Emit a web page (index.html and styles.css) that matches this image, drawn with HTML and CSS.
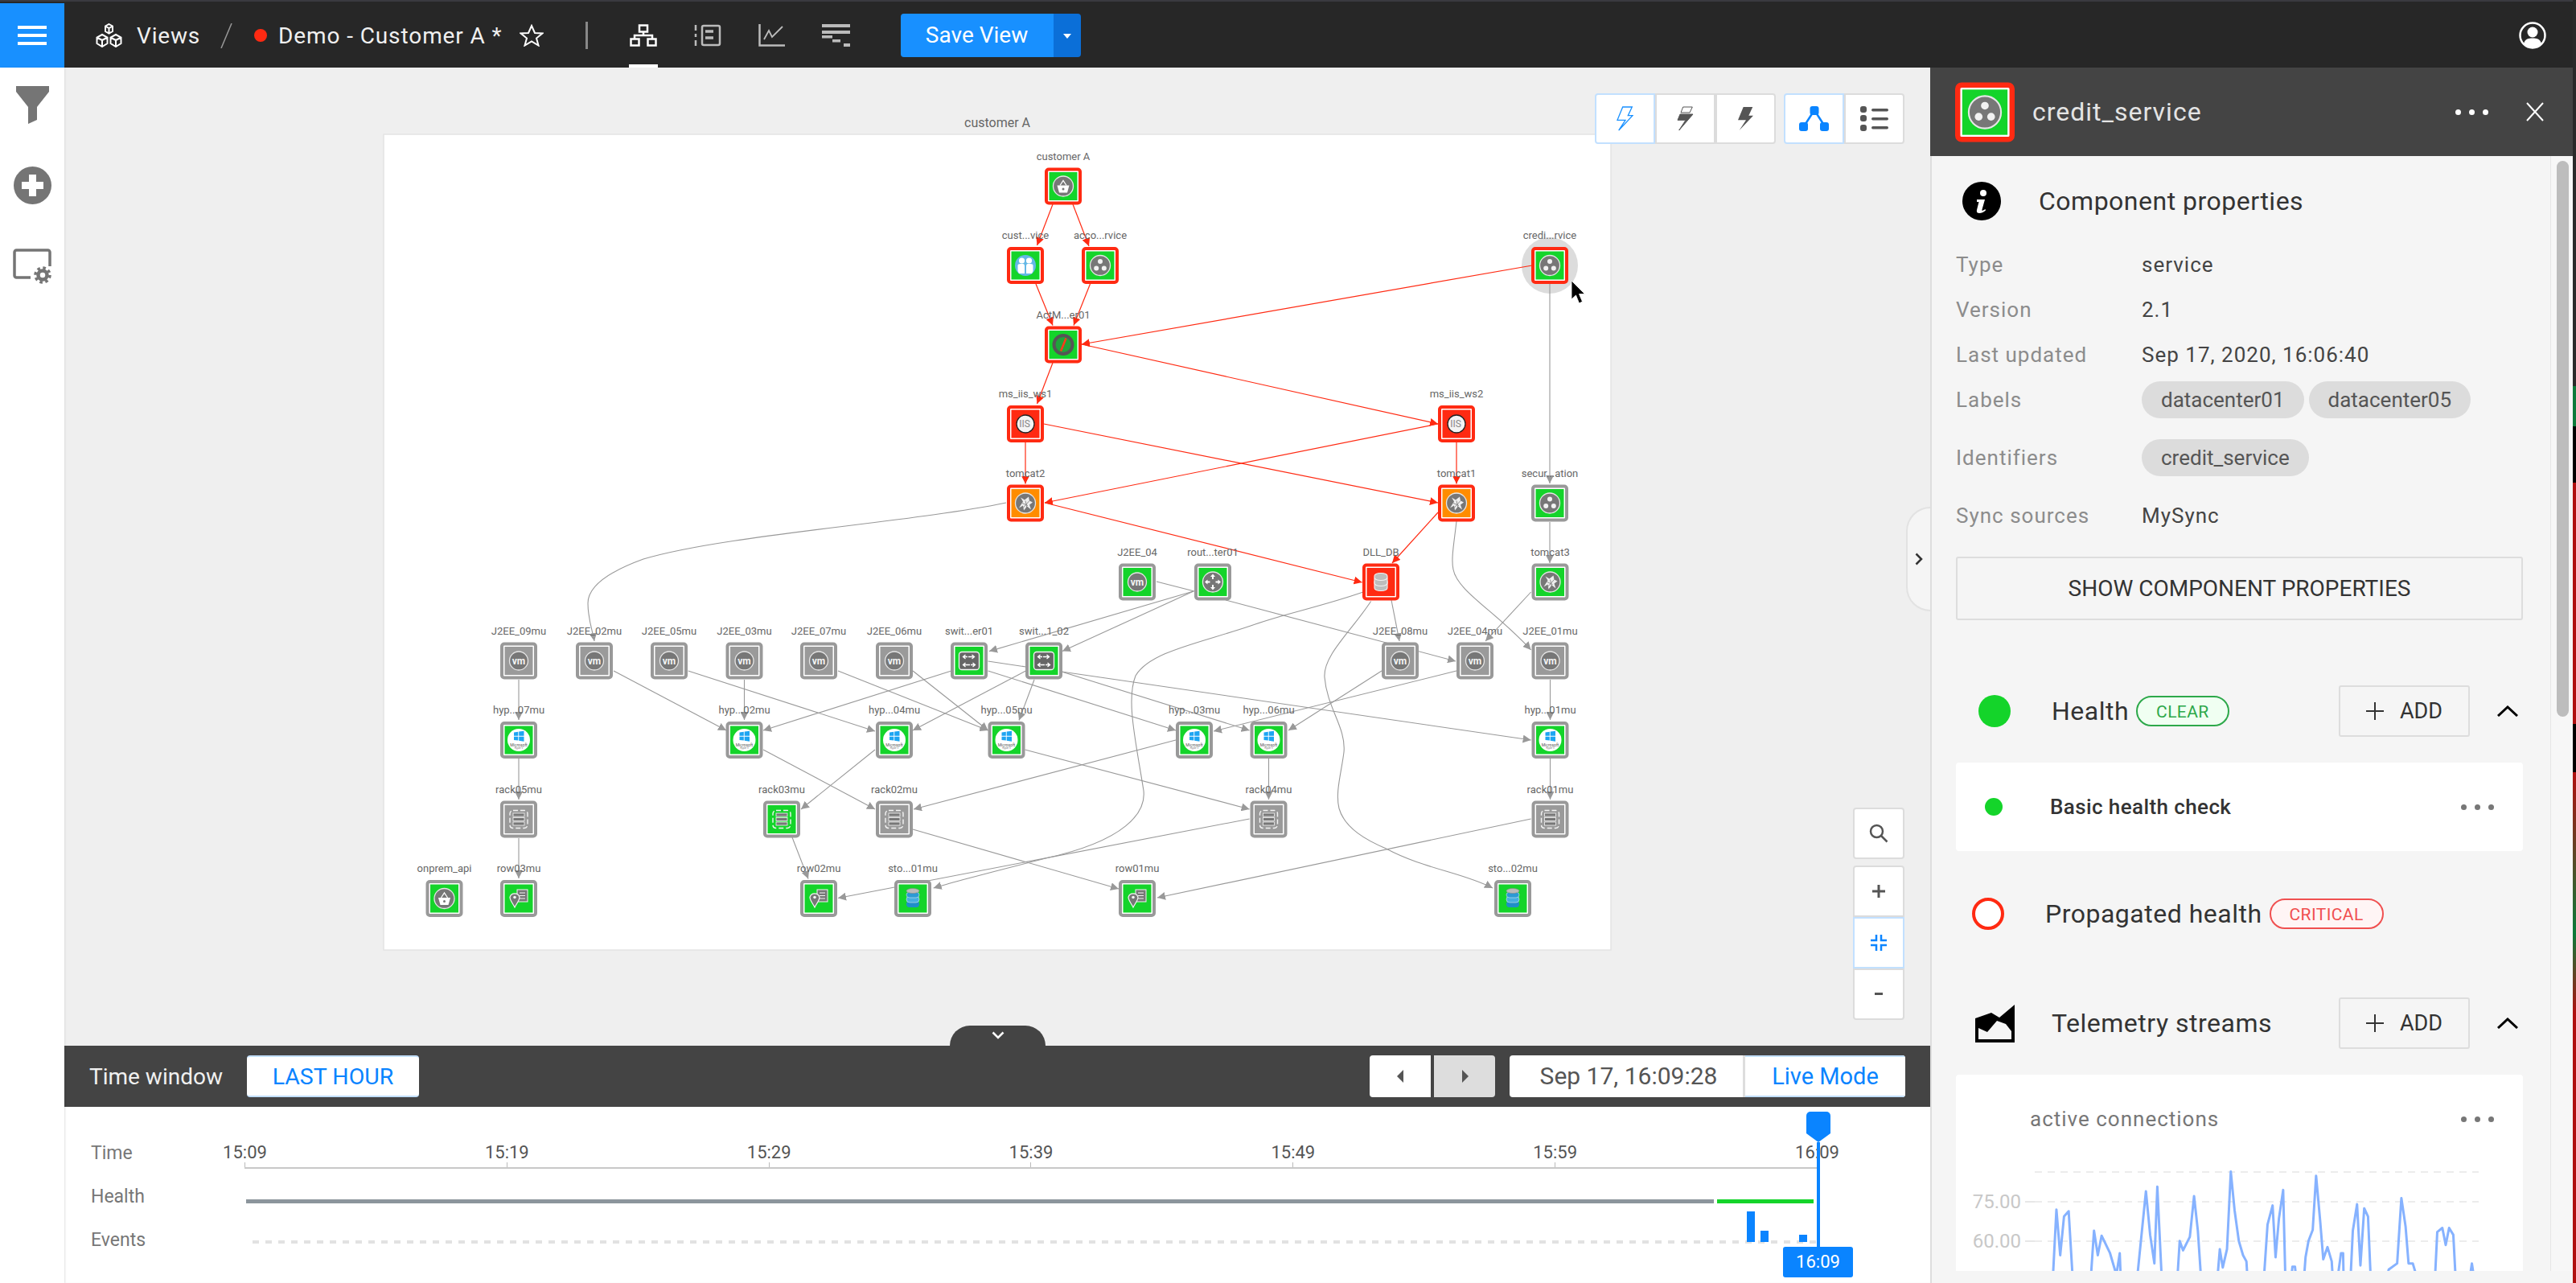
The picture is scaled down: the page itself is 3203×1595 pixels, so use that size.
FILE: index.html
```html
<!DOCTYPE html>
<html lang="en">
<head>
  <meta charset="UTF-8">
  <title>Views - Demo - Customer A</title>
  <link rel="stylesheet" href="styles.css">
</head>
<body>
<div class="app">
  <header class="topbar">
    <button class="menu-btn"><span></span><span></span><span></span></button>
    <svg class="views-icon" width="33" height="30" viewBox="0 0 33 30" fill="none" stroke="#fff" stroke-width="2">
      <path d="M16.5 1 21 3.5V10L16.5 12.5 12 10V3.5ZM12 3.5 16.5 6 21 3.5M16.5 6V12.5"/>
      <path d="M8 14 14.5 17.5V25L8 29 1.5 25V17.5ZM1.5 17.5 8 21 14.5 17.5M8 21V29"/>
      <path d="M25 14 31.5 17.5V25L25 29 18.5 25V17.5ZM18.5 17.5 25 21 31.5 17.5M25 21V29"/>
    </svg>
    <span class="crumb">Views</span>
    <svg class="crumb-slash" width="15" height="31" viewBox="0 0 15 31"><path d="M14 0 1 31" stroke="#999" stroke-width="1.5"/></svg>
    <span class="state-dot"></span>
    <span class="crumb crumb-view">Demo - Customer A *</span>
    <svg class="star-icon" width="30" height="28" viewBox="0 0 30 28" fill="none" stroke="#fff" stroke-width="2"><path d="M15 2 19 11 28.500 11.500 21 17.500 23.500 26.500 15 21.500 6.500 26.500 9 17.500 1.500 11.500 11 11Z"/></svg>
    <span class="bar-divider"></span>
    <nav class="view-tabs">
      <a class="view-tab active">
        <svg width="34" height="28" viewBox="0 0 34 28" fill="none" stroke="#fff" stroke-width="2.500"><rect x="12" y="1.500" width="10" height="8"/><path d="M17 9.500V14M6 18V14H28V18"/><rect x="1.500" y="18.500" width="10" height="8"/><rect x="22.500" y="18.500" width="10" height="8"/></svg>
      </a>
      <a class="view-tab">
        <svg width="34" height="28" viewBox="0 0 34 28" fill="none" stroke="#bbb" stroke-width="2.500"><path d="M2 1V8M2 12V16M2 20V27"/><rect x="10" y="2" width="22" height="24" rx="2"/><path d="M14 9H24M14 17H24" stroke-width="3.500"/></svg>
      </a>
      <a class="view-tab">
        <svg width="34" height="28" viewBox="0 0 34 28" fill="none" stroke="#bbb" stroke-width="2.500"><path d="M1.500 0V26.500H33"/><path d="M7 19 13 8 17 16 30 3" stroke-width="1.800"/></svg>
      </a>
      <a class="view-tab">
        <svg width="36" height="28" viewBox="0 0 36 28" fill="#bbb"><rect width="35" height="4"/><rect y="8" width="35" height="4"/><rect y="14" width="13" height="3.500"/><rect x="13" y="19" width="10" height="3.500"/><rect x="27" y="24" width="8" height="4"/></svg>
      </a>
    </nav>
    <div class="save-btn">
      <span class="save-main">Save View</span>
      <span class="save-caret"></span>
    </div>
    <svg class="user-icon" width="34" height="34" viewBox="0 0 34 34"><circle cx="17" cy="17" r="15.500" fill="none" stroke="#fff" stroke-width="2.500"/><circle cx="17" cy="13" r="6.500" fill="#fff"/><path d="M6 27C8 21 12 20.500 17 20.500S26 21 28 27C25 30.500 21 32 17 32S9 30.500 6 27Z" fill="#fff"/></svg>
  </header>

  <div class="main">
    <aside class="rail">
      <svg width="41" height="47" viewBox="0 0 41 47" fill="#757575"><path d="M0 0H41V7L26 26V42L15 47V26L0 7Z"/></svg>
      <svg width="47" height="47" viewBox="0 0 47 47"><circle cx="23.500" cy="23.500" r="23.500" fill="#757575"/><path d="M19 10H28V19H37V28H28V37H19V28H10V19H19Z" fill="#fff"/></svg>
      <svg width="48" height="44" viewBox="0 0 48 44" fill="none" stroke="#757575"><path d="M22 36H4.500A2.500 2.500 0 0 1 2 33.500V4.500A2.500 2.500 0 0 1 4.500 2H43.500A2.500 2.500 0 0 1 46 4.500V22" stroke-width="3.500"/><circle cx="37" cy="33" r="5.500" stroke-width="4.500"/><circle cx="37" cy="33" r="9" stroke-width="3.500" stroke-dasharray="3.600 3.470"/></svg>
    </aside>

    <div class="workspace">
      <section class="canvas">
        <svg class="graph" width="2320" height="1216" viewBox="80 84 2320 1216">
          <defs>
            <marker id="arrow-gray" viewBox="0 0 10 10" refX="10" refY="5" markerWidth="10" markerHeight="10" markerUnits="userSpaceOnUse" orient="auto"><path d="M0 0 10 5 0 10Z" fill="#999"/></marker>
            <marker id="arrow-red" viewBox="0 0 10 10" refX="10" refY="5" markerWidth="10" markerHeight="10" markerUnits="userSpaceOnUse" orient="auto"><path d="M0 0 10 5 0 10Z" fill="#ff2a12"/></marker>

            <!-- frames: border colour + fill colour -->
            <g id="f-gg"><rect class="fr-gray" x="-21" y="-21" width="42" height="42" rx="3"/><rect class="in-green" x="-17.500" y="-17.500" width="35" height="35"/></g>
            <g id="f-gy"><rect class="fr-gray" x="-21" y="-21" width="42" height="42" rx="3"/><rect class="in-gray" x="-17.500" y="-17.500" width="35" height="35"/></g>
            <g id="f-rg"><rect class="fr-red" x="-21" y="-21" width="42" height="42" rx="3"/><rect class="in-green" x="-17.500" y="-17.500" width="35" height="35"/></g>
            <g id="f-rr"><rect class="fr-red" x="-21" y="-21" width="42" height="42" rx="3"/><rect class="in-red" x="-17.500" y="-17.500" width="35" height="35"/></g>
            <g id="f-ro"><rect class="fr-red" x="-21" y="-21" width="42" height="42" rx="3"/><rect class="in-orange" x="-17.500" y="-17.500" width="35" height="35"/></g>

            <!-- node icons -->
            <g id="i-vm"><circle r="11.500" fill="#777" stroke="#e6e6e6" stroke-width="1.300"/><text class="ic-vm" y="4">vm</text></g>
            <g id="i-service"><circle r="12.500" fill="#777" stroke="#e6e6e6" stroke-width="1.300"/><circle cy="-5" r="3" fill="#f2f2f2"/><circle cx="-4.800" cy="3.500" r="3" fill="#f2f2f2"/><circle cx="4.800" cy="3.500" r="3" fill="#f2f2f2"/></g>
            <g id="i-basket"><circle r="12.500" fill="#777" stroke="#e6e6e6" stroke-width="1.300"/><path d="M-7.500 -1H7.500L5 8H-5Z" fill="#fff"/><path d="M-4 -1 0 -7 4 -1" fill="none" stroke="#fff" stroke-width="1.300"/><circle cy="3.500" r="1.500" fill="#777"/></g>
            <g id="i-customers"><circle r="13" fill="#63b7e6"/><circle cx="-4.500" cy="-6" r="3.600" fill="#fff"/><circle cx="4.500" cy="-6" r="3.600" fill="#fff"/><path d="M-9.500 7V0Q-9.500 -2 -6 -2H-3Q-1 -2 -1 1V10H-8ZM1 10V1Q1 -2 3 -2H6Q9.500 -2 9.500 0V7L8 10Z" fill="#fff"/></g>
            <g id="i-compass"><circle r="11.500" fill="#1fa33a" stroke="#555" stroke-width="4"/><path d="M-3 8 3.500 -8" stroke="#ff3a1a" stroke-width="2.500"/></g>
            <g id="i-iis"><circle r="11" fill="#f4f4f4" stroke="#222" stroke-width="1.300"/><text class="ic-iis" x="-1" y="4">IIS</text></g>
            <g id="i-tomcat"><circle r="12.500" fill="#777" stroke="#e6e6e6" stroke-width="1.300"/><path d="M-8 6-3-2-6-7-1-4 4-8 5-3 9-1 5 2 7 8 2 4-2 9-3 3Z" fill="#eee"/><path d="M-4 0 3 3M0-3 2 6M-3 6 5-3" stroke="#777" stroke-width=".8"/></g>
            <g id="i-db" fill="#bdbdbd" stroke="#f2f2f2" stroke-width="1.100"><rect x="-8" y="-4" width="16" height="15" rx="7.500" ry="3.500"/><rect x="-8" y="-8" width="16" height="13" rx="7.500" ry="3.500"/><rect x="-8" y="-11" width="16" height="9" rx="7.500" ry="3.500"/></g>
            <g id="i-router"><circle r="12.500" fill="#777" stroke="#e6e6e6" stroke-width="1.300"/><path d="M0-10 3-6.500H1V-3.500H-1V-6.500H-3ZM0 10 3 6.500H1V3.500H-1V6.500H-3ZM-10 0-6.500-3V-1H-3.500V1H-6.500V3ZM10 0 6.500-3V-1H3.500V1H6.500V3Z" fill="#fff"/></g>
            <g id="i-switch"><rect x="-12.500" y="-11" width="25" height="22" rx="3.500" fill="#666" stroke="#f4f4f4" stroke-width="1.300"/><path d="M-1-5H6M3.500-7.500 6.500-5 3.500-2.500M1 5H-7M-4.500 2.500-7.500 5-4.500 7.500M-7-5H-2M-4.500-7.500-7.500-5-4.500-2.500M2 5H7M4.500 2.500 7.500 5 4.500 7.500" fill="none" stroke="#fff" stroke-width="1.300"/></g>
            <g id="i-hyperv"><circle r="14" fill="#fff"/><path d="M-6-4.500-.7-5.200V-.2H-6ZM.2-5.400 6.500-6.300V-.2H.2ZM-6 .7H-.7V5.600L-6 4.900ZM.2 .7H6.500V6.800L.2 5.800Z" fill="#1da5f2" transform="translate(0 -5)"/><text class="ic-ms" y="7.500">Microsoft</text><text class="ic-hv" y="11">Hyper-V</text></g>
            <g id="i-rack"><rect x="-11" y="-11" width="22" height="22" rx="4" fill="none" stroke="#f4f4f4" stroke-width="1.400" stroke-dasharray="6 3"/><rect x="-7" y="-7.500" width="14" height="4" fill="#777" stroke="#f4f4f4" stroke-width=".8"/><rect x="-7" y="-2" width="14" height="4" fill="#777" stroke="#f4f4f4" stroke-width=".8"/><rect x="-7" y="3.500" width="14" height="4" fill="#777" stroke="#f4f4f4" stroke-width=".8"/></g>
            <g id="i-row"><rect x="-2" y="-11" width="13" height="15" fill="#777" stroke="#f4f4f4"/><path d="M1-7H8M1-3.500H8M1 0H8" stroke="#f4f4f4"/><path d="M-11-1.500A6.200 6.200 0 0 1 1-1.500C1 2-3 7-5 11-7 7-11 2-11-1.500Z" fill="#777" stroke="#f4f4f4" stroke-width="1.200"/><circle cx="-5" cy="-1.500" r="1.800" fill="#f4f4f4"/></g>
            <g id="i-storage"><rect x="-8" y="3" width="16" height="8" rx="4" fill="#1f8fc8"/><rect x="-8" y="-3" width="16" height="8" rx="4" fill="#45aee0" stroke="#d8e8f0" stroke-width=".6"/><rect x="-8" y="-8" width="16" height="7" rx="4" fill="#2c9ad4" stroke="#d8e8f0" stroke-width=".6"/><ellipse cy="-9.500" rx="8" ry="3" fill="#bbb" stroke="#888" stroke-width=".6"/></g>
          </defs>

          <text class="graph-title" x="1240" y="158">customer A</text>
          <rect class="graph-sheet" x="477" y="167" width="1526" height="1014"/>
          <circle cx="1927" cy="330" r="35" fill="#dcdcdc"/>

          <!-- edges, healthy -->
          <g class="edges-gray" marker-end="url(#arrow-gray)">
            <path d="M1927 353V601"/>
            <path d="M1927 649V700"/>
            <path d="M1251 625C1130 650 900 665 800 695 745 715 731 735 731 750 731 770 737 785 739 797"/>
            <path d="M645 845V895"/>
            <path d="M645 943V994"/>
            <path d="M645 1042V1092"/>
            <path d="M763 834 903 908"/>
            <path d="M855.600 834 1088 909"/>
            <path d="M925.500 845V895"/>
            <path d="M1042 834 1228.500 908"/>
            <path d="M1135 834 1228.500 908"/>
            <path d="M1183 834 949 908"/>
            <path d="M1275.500 834 1135 908"/>
            <path d="M1286 845 1267 895.500"/>
            <path d="M1228.500 834 1462 908"/>
            <path d="M1320 835 1553.600 908"/>
            <path d="M1320 835 1903.600 920"/>
            <path d="M1484 735 1230 809.600"/>
            <path d="M1484 735 1321 809.600"/>
            <path d="M1524 746 1810 822"/>
            <path d="M1730 746 1740 797"/>
            <path d="M1695 736C1640 755 1600 762 1555 778 1490 800 1430 810 1412 840 1400 870 1412 920 1422 983 1425 1010 1400 1045 1300 1067 1250 1080 1190 1095 1160.700 1104"/>
            <path d="M1704.600 747.500C1680 785 1645 815 1647 842 1650 880 1674 905 1671 935 1668 960 1660 985 1665 1005 1672 1030 1700 1045 1723.500 1055 1770 1080 1820 1085 1856 1104"/>
            <path d="M1811 648C1808 675 1804 695 1807 708 1812 735 1860 760 1903.600 808"/>
            <path d="M1903.600 736 1847 797"/>
            <path d="M1718 834 1602 908"/>
            <path d="M1811 834 1509 909"/>
            <path d="M1927.500 845V895"/>
            <path d="M1927.500 943V994"/>
            <path d="M1577.500 943V994"/>
            <path d="M1274.500 932 1553.600 1006"/>
            <path d="M949 932 1088 1006"/>
            <path d="M1088 932 996 1006"/>
            <path d="M1462 920 1136 1006"/>
            <path d="M985 1041 1005 1092.600"/>
            <path d="M1135 1031 1391 1105"/>
            <path d="M1553.600 1018 1042 1116.500"/>
            <path d="M1903.600 1018 1439 1116"/>
          </g>
          <g class="edges-gray">
            <path d="M1228.500 822 1275.500 829"/>
            <path d="M1438 723 1485 735"/>
          </g>

          <!-- edges, propagating -->
          <g class="edges-red" marker-end="url(#arrow-red)">
            <path d="M1309 254 1289.500 305"/>
            <path d="M1334 254 1354 306"/>
            <path d="M1288 353 1309 404.500"/>
            <path d="M1355.500 353 1335 404.500"/>
            <path d="M1905 330 1345 428"/>
            <path d="M1345 428 1788 527"/>
            <path d="M1309 451 1289.500 502"/>
            <path d="M1275 550V601.600"/>
            <path d="M1788 527 1299 625"/>
            <path d="M1298 527 1788 625"/>
            <path d="M1811 550V601.600"/>
            <path d="M1299 625 1693.600 724"/>
            <path d="M1788 637 1731 700"/>
          </g>

          <!-- nodes -->
          <g class="nodes">
            <g transform="translate(1322 231.500)"><use href="#f-rg"/><use href="#i-basket"/><text y="-33">customer A</text></g>
            <g transform="translate(1275 330)"><use href="#f-rg"/><use href="#i-customers"/><text y="-33">cust...vice</text></g>
            <g transform="translate(1368 330)"><use href="#f-rg"/><use href="#i-service"/><text y="-33">acco...rvice</text></g>
            <g transform="translate(1927 330)"><use href="#f-rg"/><use href="#i-service"/><text y="-33">credi...rvice</text></g>
            <g transform="translate(1322 428.500)"><use href="#f-rg"/><use href="#i-compass"/><text y="-33">ActM...er01</text></g>
            <g transform="translate(1275 527)"><use href="#f-rr"/><use href="#i-iis"/><text y="-33">ms_iis_ws1</text></g>
            <g transform="translate(1811 527)"><use href="#f-rr"/><use href="#i-iis"/><text y="-33">ms_iis_ws2</text></g>
            <g transform="translate(1275 625.500)"><use href="#f-ro"/><use href="#i-tomcat"/><text y="-33">tomcat2</text></g>
            <g transform="translate(1811 625.500)"><use href="#f-ro"/><use href="#i-tomcat"/><text y="-33">tomcat1</text></g>
            <g transform="translate(1927 625.500)"><use href="#f-gg"/><use href="#i-service"/><text y="-33">secur...ation</text></g>
            <g transform="translate(1414 723.500)"><use href="#f-gg"/><use href="#i-vm"/><text y="-33">J2EE_04</text></g>
            <g transform="translate(1508 723.500)"><use href="#f-gg"/><use href="#i-router"/><text y="-33">rout...ter01</text></g>
            <g transform="translate(1717 723.500)"><use href="#f-rr"/><use href="#i-db"/><text y="-33">DLL_DB</text></g>
            <g transform="translate(1927.500 723.500)"><use href="#f-gg"/><use href="#i-tomcat"/><text y="-33">tomcat3</text></g>

            <g transform="translate(645 821.500)"><use href="#f-gy"/><use href="#i-vm"/><text y="-33">J2EE_09mu</text></g>
            <g transform="translate(739 821.500)"><use href="#f-gy"/><use href="#i-vm"/><text y="-33">J2EE_02mu</text></g>
            <g transform="translate(832 821.500)"><use href="#f-gy"/><use href="#i-vm"/><text y="-33">J2EE_05mu</text></g>
            <g transform="translate(925.500 821.500)"><use href="#f-gy"/><use href="#i-vm"/><text y="-33">J2EE_03mu</text></g>
            <g transform="translate(1018 821.500)"><use href="#f-gy"/><use href="#i-vm"/><text y="-33">J2EE_07mu</text></g>
            <g transform="translate(1112 821.500)"><use href="#f-gy"/><use href="#i-vm"/><text y="-33">J2EE_06mu</text></g>
            <g transform="translate(1205 821.500)"><use href="#f-gg"/><use href="#i-switch"/><text y="-33">swit...er01</text></g>
            <g transform="translate(1298 821.500)"><use href="#f-gg"/><use href="#i-switch"/><text y="-33">swit...1_02</text></g>
            <g transform="translate(1741 821.500)"><use href="#f-gy"/><use href="#i-vm"/><text y="-33">J2EE_08mu</text></g>
            <g transform="translate(1834 821.500)"><use href="#f-gy"/><use href="#i-vm"/><text y="-33">J2EE_04mu</text></g>
            <g transform="translate(1927.500 821.500)"><use href="#f-gy"/><use href="#i-vm"/><text y="-33">J2EE_01mu</text></g>

            <g transform="translate(645 920)"><use href="#f-gg"/><use href="#i-hyperv"/><text y="-33">hyp...07mu</text></g>
            <g transform="translate(925.500 920)"><use href="#f-gg"/><use href="#i-hyperv"/><text y="-33">hyp...02mu</text></g>
            <g transform="translate(1112 920)"><use href="#f-gg"/><use href="#i-hyperv"/><text y="-33">hyp...04mu</text></g>
            <g transform="translate(1251.500 920)"><use href="#f-gg"/><use href="#i-hyperv"/><text y="-33">hyp...05mu</text></g>
            <g transform="translate(1485 920)"><use href="#f-gg"/><use href="#i-hyperv"/><text y="-33">hyp...03mu</text></g>
            <g transform="translate(1577.500 920)"><use href="#f-gg"/><use href="#i-hyperv"/><text y="-33">hyp...06mu</text></g>
            <g transform="translate(1927.500 920)"><use href="#f-gg"/><use href="#i-hyperv"/><text y="-33">hyp...01mu</text></g>

            <g transform="translate(645 1018.500)"><use href="#f-gy"/><use href="#i-rack"/><text y="-33">rack05mu</text></g>
            <g transform="translate(972 1018.500)"><use href="#f-gg"/><use href="#i-rack"/><text y="-33">rack03mu</text></g>
            <g transform="translate(1112 1018.500)"><use href="#f-gy"/><use href="#i-rack"/><text y="-33">rack02mu</text></g>
            <g transform="translate(1577.500 1018.500)"><use href="#f-gy"/><use href="#i-rack"/><text y="-33">rack04mu</text></g>
            <g transform="translate(1927.500 1018.500)"><use href="#f-gy"/><use href="#i-rack"/><text y="-33">rack01mu</text></g>

            <g transform="translate(552.500 1117)"><use href="#f-gg"/><use href="#i-basket"/><text y="-33">onprem_api</text></g>
            <g transform="translate(645 1117)"><use href="#f-gg"/><use href="#i-row"/><text y="-33">row03mu</text></g>
            <g transform="translate(1018 1117)"><use href="#f-gg"/><use href="#i-row"/><text y="-33">row02mu</text></g>
            <g transform="translate(1135 1117)"><use href="#f-gg"/><use href="#i-storage"/><text y="-33">sto...01mu</text></g>
            <g transform="translate(1414 1117)"><use href="#f-gg"/><use href="#i-row"/><text y="-33">row01mu</text></g>
            <g transform="translate(1881 1117)"><use href="#f-gg"/><use href="#i-storage"/><text y="-33">sto...02mu</text></g>
          </g>

          <path transform="translate(1954 349)" d="M0 0V23L5.500 18 9.500 28 13.500 26 9.500 16.500H16.500Z" fill="#000" stroke="#fff" stroke-width=".8"/>
        </svg>

        <div class="tool-row">
          <div class="btn-group">
            <button class="tool-btn selected"><svg width="21" height="31" viewBox="-1 -1 21 31" fill="none" stroke="#1890ff" stroke-width="1.300"><path d="M6.700 0H18.300L13.300 10.700H19L1.700 29 10 16.300H0Z"/></svg></button>
            <button class="tool-btn"><svg width="21" height="31" viewBox="-1 -1 21 31" fill="#555" stroke="#555"><path d="M6.700 0H18.300L15 7H4Z" fill="none"/><path d="M3 9H19L1.700 29 10 16.300H0Z"/></svg></button>
            <button class="tool-btn"><svg width="21" height="31" viewBox="-1 -1 21 31" fill="#555"><path d="M6.700 0H18.300L13.300 10.700H19L1.700 29 10 16.300H0Z"/></svg></button>
          </div>
          <div class="btn-group">
            <button class="tool-btn selected"><svg width="38" height="32" viewBox="0 0 38 32"><path d="M19 6 6 26M19 6 32 26" stroke="#0a84ff" stroke-width="2.500" transform="translate(0 -1)"/><rect x="13.500" y="0" width="11" height="11" rx="3" fill="#0a84ff"/><rect x="0" y="20" width="11" height="11" rx="3" fill="#0a84ff"/><rect x="26" y="20" width="11" height="11" rx="3" fill="#0a84ff"/></svg></button>
            <button class="tool-btn"><svg width="36" height="32" viewBox="0 0 36 32" fill="#555"><rect y="0" width="8" height="8" rx="3"/><rect y="11" width="8" height="8" rx="3"/><rect y="23" width="8" height="8" rx="3"/><rect x="14" y="3" width="21" height="3.500" rx="1.700"/><rect x="14" y="14" width="21" height="3.500" rx="1.700"/><rect x="14" y="25" width="21" height="3.500" rx="1.700"/></svg></button>
          </div>
        </div>

        <div class="zoom-tools">
          <button class="zoom-btn solo"><svg width="24" height="24" viewBox="0 0 24 24" fill="none" stroke="#555" stroke-width="2.500"><circle cx="9.500" cy="9.500" r="7.500"/><path d="M15 15 22.500 22.500"/></svg></button>
          <div class="zoom-stack">
            <button class="zoom-btn"><svg width="18" height="18" viewBox="0 0 18 18" stroke="#555" stroke-width="3"><path d="M9 1V17M1 9H17"/></svg></button>
            <button class="zoom-btn selected"><svg width="20" height="20" viewBox="0 0 20 20" fill="none" stroke="#0a84ff" stroke-width="2.500"><path d="M0 7H7V0M13 0V7H20M20 13H13V20M7 20V13H0"/></svg></button>
            <button class="zoom-btn"><svg width="10" height="4" viewBox="0 0 10 4"><rect width="10" height="3" fill="#555"/></svg></button>
          </div>
        </div>

        <div class="panel-handle"><svg width="10" height="16" viewBox="0 0 10 16" fill="none" stroke="#333" stroke-width="2.500"><path d="M1.500 1.500 8 8 1.500 14.500"/></svg></div>
        <div class="time-handle"><svg width="16" height="10" viewBox="0 0 16 10" fill="none" stroke="#fff" stroke-width="2.500"><path d="M1.500 1.500 8 8 14.500 1.500"/></svg></div>
      </section>

      <section class="time-bar">
        <span class="time-title">Time window</span>
        <button class="time-btn accent range-btn">LAST HOUR</button>
        <div class="time-controls">
          <div class="step-group">
            <button class="step-btn"><svg width="9" height="16" viewBox="0 0 9 16"><path d="M8 0V16L0 8Z" fill="#555"/></svg></button>
            <button class="step-btn off"><svg width="9" height="16" viewBox="0 0 9 16"><path d="M1 0V16L9 8Z" fill="#555"/></svg></button>
          </div>
          <div class="clock-group">
            <span class="clock-value">Sep 17, 16:09:28</span>
            <button class="time-btn accent live-btn">Live Mode</button>
          </div>
        </div>
      </section>

      <section class="timeline">
        <div class="tl-row">
          <span class="tl-label">Time</span>
          <div class="ticks">
            <div class="tick"><span>15:09</span></div>
            <div class="tick"><span>15:19</span></div>
            <div class="tick"><span>15:29</span></div>
            <div class="tick"><span>15:39</span></div>
            <div class="tick"><span>15:49</span></div>
            <div class="tick"><span>15:59</span></div>
            <div class="tick"><span>16:09</span></div>
          </div>
        </div>
        <div class="tl-row">
          <span class="tl-label">Health</span>
          <div class="health-track"><span class="health-unknown"></span><span class="health-clear"></span></div>
        </div>
        <div class="tl-row">
          <span class="tl-label">Events</span>
          <div class="events-track">
            <span class="event-bar" style="left:1858px;height:38px"></span>
            <span class="event-bar" style="left:1875px;height:14px"></span>
            <span class="event-bar" style="left:1923px;height:9px"></span>
          </div>
        </div>
        <div class="now-marker">
          <svg class="now-grip" width="30" height="38" viewBox="0 0 30 38"><path d="M5 0H25A5 5 0 0 1 30 5V27L15 38 0 27V5A5 5 0 0 1 5 0Z" fill="#0a84ff"/></svg>
          <span class="now-line"></span>
          <span class="now-tag">16:09</span>
        </div>
      </section>
    </div>

    <aside class="panel">
      <header class="panel-head">
        <svg class="panel-node" width="74" height="75" viewBox="-23 -23 46 46"><use href="#f-rg"/><use href="#i-service"/></svg>
        <h2 class="panel-name">credit_service</h2>
        <span class="dots light"><i></i><i></i><i></i></span>
        <svg class="panel-close" width="22" height="24" viewBox="0 0 22 24" stroke="#fff" stroke-width="2"><path d="M1 1 21 23M21 1 1 23"/></svg>
      </header>

      <div class="panel-scroll">
        <div class="panel-content">
          <div class="info-head">
            <svg width="48" height="48" viewBox="0 0 48 48"><circle cx="24" cy="24" r="24" fill="#000"/><circle cx="26" cy="14" r="4" fill="#fff"/><path d="M18 22H28L24.500 34.500C24 36 25 36.500 28.500 34L29 35.500C26 39 16.500 41.500 18 35L20.500 25H18Z" fill="#fff"/></svg>
            <h3 class="section-title">Component properties</h3>
          </div>
          <div class="props">
            <div class="prop"><span class="prop-key">Type</span><span class="prop-val">service</span></div>
            <div class="prop"><span class="prop-key">Version</span><span class="prop-val">2.1</span></div>
            <div class="prop"><span class="prop-key">Last updated</span><span class="prop-val">Sep 17, 2020, 16:06:40</span></div>
            <div class="prop"><span class="prop-key">Labels</span><span class="chip">datacenter01</span><span class="chip">datacenter05</span></div>
            <div class="prop spaced"><span class="prop-key">Identifiers</span><span class="chip">credit_service</span></div>
            <div class="prop"><span class="prop-key">Sync sources</span><span class="prop-val">MySync</span></div>
          </div>
          <button class="show-btn">SHOW COMPONENT PROPERTIES</button>

          <div class="section-head health-head">
            <span class="health-dot"></span>
            <h3 class="section-title health-title">Health</h3>
            <span class="badge clear">CLEAR</span>
            <button class="add-btn"><svg width="22" height="22" viewBox="0 0 22 22" stroke="#333" stroke-width="2"><path d="M11 0V22M0 11H22"/></svg>ADD</button>
            <svg class="chevron" width="26" height="14" viewBox="0 0 26 14" fill="none" stroke="#000" stroke-width="3"><path d="M1 13 13 2 25 13"/></svg>
          </div>
          <div class="check-card">
            <span class="check-dot"></span>
            <span class="check-name">Basic health check</span>
            <span class="dots"><i></i><i></i><i></i></span>
          </div>

          <div class="section-head propagated">
            <span class="ring"></span>
            <h3 class="section-title propagated-title">Propagated health</h3>
            <span class="badge critical">CRITICAL</span>
          </div>

          <div class="section-head telemetry-head">
            <svg class="telemetry-icon" width="49" height="47" viewBox="0 0 49 47"><path d="M0 47V17L20 10 30 16 49 0V47ZM4 43H45V33L38 24 27 20 15 34 4 29Z" fill="#000" fill-rule="evenodd"/></svg>
            <h3 class="section-title telemetry-title">Telemetry streams</h3>
            <button class="add-btn"><svg width="22" height="22" viewBox="0 0 22 22" stroke="#333" stroke-width="2"><path d="M11 0V22M0 11H22"/></svg>ADD</button>
            <svg class="chevron" width="26" height="14" viewBox="0 0 26 14" fill="none" stroke="#000" stroke-width="3"><path d="M1 13 13 2 25 13"/></svg>
          </div>
          <div class="stream-card">
            <div class="stream-head">
              <span class="stream-name">active connections</span>
              <span class="dots"><i></i><i></i><i></i></span>
            </div>
            <svg class="stream-chart" width="705" height="134" viewBox="0 0 705 134">
              <path class="grid" d="M98 11H650M98 48H650M98 97H650"/>
              <path d="M86 48H98M86 97H98" stroke="#e0e0e0" stroke-width="1.500"/>
              <text class="axis-num" x="81" y="56">75.00</text>
              <text class="axis-num" x="81" y="105">60.00</text>
              <polyline class="series" transform="translate(-52.500 -646) scale(.525 .507)" points="330,1548 338,1388 347,1500 356,1405 367,1392 376,1548 420,1548 427,1440 436,1500 445,1452 465,1495 480,1548 488,1495 490,1548 530,1548 550,1343 560,1450 570,1520 577,1332 587,1548 625,1548 630,1465 638,1488 654,1455 664,1355 673,1440 680,1548 720,1548 725,1485 732,1530 742,1485 751,1295 760,1390 770,1465 780,1500 788,1515 790,1548 830,1548 838,1425 850,1378 857,1505 865,1410 875,1340 880,1548 895,1548 897,1528 903,1528 905,1548 925,1548 928,1505 935,1465 945,1438 953,1305 963,1420 970,1510 980,1480 990,1515 992,1548 1005,1548 1012,1495 1017,1495 1018,1548 1035,1548 1040,1440 1050,1375 1058,1525 1067,1385 1076,1405 1082,1548 1122,1548 1125,1535 1145,1520 1155,1360 1165,1430 1172,1520 1182,1520 1190,1548 1235,1548 1240,1443 1252,1433 1260,1475 1268,1433 1278,1450 1283,1548 1318,1548 1322,1520 1326,1548"/>
            </svg>
          </div>
        </div>
        <div class="scroll-track"><span class="scroll-thumb"></span></div>
      </div>
    </aside>
  </div>
</div>
<div class="edge-strip"></div>
</body>
</html>
```

FILE: styles.css
```css
* {
  margin: 0;
  padding: 0;
  box-sizing: border-box;
  font-family: Roboto, 'Liberation Sans', sans-serif;
}

html, body {
  height: 100%;
}

body {
  display: flex;
  height: 1595px;
  overflow: hidden;
  background: #fff;
}

button {
  border: none;
  background: none;
  cursor: pointer;
}

.app {
  width: 3199px;
  display: flex;
  flex-direction: column;
}

.edge-strip {
  width: 4px;
  background: linear-gradient(#2a2a2a 0, #2a2a2a 480px, #0d7a3a 480px, #0d7a3a 530px, #000 530px, #000 600px, #b01010 600px, #b01010 900px, #000 900px, #000 960px, #b01010 960px, #0d7a3a 1160px, #b01010 1260px, #b01010 1595px);
}

/* top bar */
.topbar {
  height: 84px;
  flex-shrink: 0;
  display: flex;
  align-items: center;
  padding-top: 2px;
  background: #272727;
  border-top: 2px solid #3a3a40;
}

.menu-btn {
  width: 80px;
  height: 80px;
  align-self: flex-end;
  background: #1890ff;
  display: flex;
  flex-direction: column;
  align-items: center;
  justify-content: center;
  gap: 6px;
}

.menu-btn span {
  display: block;
  width: 36px;
  height: 4px;
  background: #fff;
}

.views-icon {
  margin-left: 39px;
}

.crumb {
  margin-left: 18px;
  font-size: 28px;
  letter-spacing: 0.8px;
  color: #f0f0f0;
}

.crumb-slash {
  margin-left: 25px;
}

.state-dot {
  width: 16px;
  height: 16px;
  margin-left: 27px;
  border-radius: 50%;
  background: #ff2a12;
}

.crumb-view {
  margin-left: 14px;
  letter-spacing: 0.9px;
}

.star-icon {
  margin-left: 21px;
}

.bar-divider {
  width: 3px;
  height: 34px;
  margin-left: 52px;
  background: #888;
}

.view-tabs {
  display: flex;
  height: 100%;
  margin-left: 29px;
}

.view-tab {
  position: relative;
  width: 80px;
  display: flex;
  align-items: center;
  justify-content: center;
}

.view-tab.active::after {
  content: "";
  position: absolute;
  bottom: 0;
  left: 22px;
  width: 36px;
  height: 4px;
  background: #fff;
}

.save-btn {
  display: flex;
  height: 54px;
  margin-left: 40px;
  border-radius: 4px;
  overflow: hidden;
}

.save-main {
  width: 190px;
  background: #1890ff;
  color: #fff;
  font-size: 28px;
  line-height: 54px;
  text-align: center;
}

.save-caret {
  width: 34px;
  background: #0b6fd8;
  position: relative;
}

.save-caret::after {
  content: "";
  position: absolute;
  left: 12px;
  top: 25px;
  border-left: 5.5px solid transparent;
  border-right: 5.5px solid transparent;
  border-top: 6px solid #fff;
}

.user-icon {
  margin-left: auto;
  margin-right: 33px;
}

.main {
  flex: 1;
  display: flex;
  min-height: 0;
}

/* left rail */
.rail {
  width: 80px;
  flex-shrink: 0;
  display: flex;
  flex-direction: column;
  align-items: center;
  background: #fff;
  padding-top: 23px;
  z-index: 2;
  box-shadow: 1px 0 2px rgba(0, 0, 0, 0.08);
}

.rail svg:nth-child(2) {
  margin-top: 53px;
}

.rail svg:nth-child(3) {
  margin-top: 55px;
}

/* workspace */
.workspace {
  width: 2320px;
  flex-shrink: 0;
  display: flex;
  flex-direction: column;
}

.canvas {
  position: relative;
  height: 1216px;
  background: #efefef;
}

.graph {
  display: block;
}

.graph-title {
  font-size: 16px;
  fill: #666;
  text-anchor: middle;
}

.graph-sheet {
  fill: #fff;
  stroke: #e4e4e4;
  stroke-width: 1.5;
}

.edges-gray path {
  fill: none;
  stroke: #999;
  stroke-width: 1.1;
}

.edges-red path {
  fill: none;
  stroke: #ff2a12;
  stroke-width: 1.2;
}

.fr-gray, .fr-red {
  fill: #fff;
  stroke-width: 4;
}

.fr-gray {
  stroke: #999;
}

.fr-red {
  stroke: #ff2a12;
}

.in-green {
  fill: #14d42a;
}

.in-gray {
  fill: #9a9a9a;
}

.in-red {
  fill: #ff2a12;
}

.in-orange {
  fill: #ff8c00;
}

.nodes text {
  font-size: 13px;
  fill: #666;
  text-anchor: middle;
}

.ic-vm, .ic-iis, .ic-ms, .ic-hv {
  text-anchor: middle;
}

.ic-vm {
  font-size: 12px;
  font-weight: 700;
  fill: #f4f4f4;
}

.ic-iis {
  font-size: 12px;
  fill: #888;
}

.ic-ms {
  font-size: 5px;
  fill: #555;
}

.ic-hv {
  font-size: 3px;
  fill: #777;
}

.tool-row {
  position: absolute;
  top: 32px;
  right: 32px;
  display: flex;
  gap: 10px;
}

.btn-group {
  display: flex;
}

.tool-btn {
  width: 75px;
  height: 63px;
  display: flex;
  align-items: center;
  justify-content: center;
  background: #fff;
  border: 2px solid #dcdcdc;
}

.tool-btn:first-child {
  border-radius: 4px 0 0 4px;
}

.tool-btn:last-child {
  border-radius: 0 4px 4px 0;
}

.tool-btn.selected {
  border-color: #c2e0ff;
}

.zoom-tools {
  position: absolute;
  top: 920px;
  right: 32px;
  display: flex;
  flex-direction: column;
  gap: 8px;
}

.zoom-stack {
  display: flex;
  flex-direction: column;
}

.zoom-btn {
  width: 64px;
  height: 64px;
  display: flex;
  align-items: center;
  justify-content: center;
  background: #fff;
  border: 2px solid #dcdcdc;
}

.zoom-btn.solo {
  border-radius: 4px;
}

.zoom-stack .zoom-btn:first-child {
  border-radius: 4px 4px 0 0;
}

.zoom-stack .zoom-btn:last-child {
  border-radius: 0 0 4px 4px;
}

.zoom-btn.selected {
  border-color: #c2e0ff;
}

.panel-handle {
  position: absolute;
  top: 546px;
  right: 0;
  width: 30px;
  height: 130px;
  display: flex;
  align-items: center;
  justify-content: center;
  background: #f5f5f5;
  border: 2px solid #e2e2e2;
  border-right: none;
  border-radius: 30px 0 0 30px;
}

.time-handle {
  position: absolute;
  bottom: 0;
  left: 1101px;
  width: 119px;
  height: 25px;
  display: flex;
  justify-content: center;
  padding-top: 7px;
  background: #444;
  border-radius: 28px 28px 0 0;
}

/* time window bar */
.time-bar {
  height: 76px;
  flex-shrink: 0;
  display: flex;
  align-items: center;
  background: #444;
  padding: 0 31px 0 31px;
}

.time-title {
  font-size: 28px;
  color: #f0f0f0;
}

.time-btn {
  height: 52px;
  background: #fff;
  color: #0a84ff;
  font-size: 29px;
  border-top: 2px solid #c2e0ff;
  border-bottom: 2px solid #c2e0ff;
}

.range-btn {
  width: 214px;
  margin-left: 30px;
  border-radius: 4px;
  font-size: 28.5px;
}

.time-controls {
  margin-left: auto;
  display: flex;
  gap: 18px;
}

.step-group {
  display: flex;
  gap: 4px;
}

.step-btn {
  width: 76px;
  height: 52px;
  display: flex;
  align-items: center;
  justify-content: center;
  background: #fff;
  border-radius: 4px 0 0 4px;
}

.step-btn.off {
  background: #dddddd;
  border-radius: 0 4px 4px 0;
}

.clock-group {
  display: flex;
  height: 52px;
  background: #fff;
  border-radius: 4px;
  overflow: hidden;
}

.clock-value {
  width: 293px;
  padding-left: 6px;
  text-align: center;
  font-size: 30px;
  line-height: 52px;
  color: #555;
  border-right: 3px solid #ddd;
}

.live-btn {
  width: 199px;
}

/* timeline */
.timeline {
  position: relative;
  flex: 1;
  padding-top: 30px;
  background: #fff;
  box-shadow: inset 1px 0 2px rgba(0, 0, 0, 0.05);
}

.tl-row {
  display: flex;
  align-items: center;
  height: 54px;
}

.tl-label {
  width: 224px;
  padding-left: 33px;
  font-size: 23px;
  color: #777;
}

.ticks {
  position: relative;
  width: 1956px;
  height: 47px;
  align-self: flex-start;
  display: flex;
  justify-content: space-between;
  border-bottom: 2px solid #c8c8c8;
}

.tick {
  position: relative;
  width: 1px;
  height: 45px;
  display: flex;
  justify-content: center;
}

.tick::after {
  content: "";
  position: absolute;
  left: 0;
  bottom: 0;
  width: 1px;
  height: 6px;
  background: #bbb;
}

.tick span {
  flex-shrink: 0;
  padding-top: 14px;
  font-size: 22px;
  line-height: 26px;
  color: #555;
}

.health-track {
  width: 1950px;
  height: 5px;
  margin: 13px 0 0 2px;
  display: flex;
  gap: 4px;
}

.health-unknown {
  width: 1825px;
  background: #8c959c;
}

.health-clear {
  width: 120px;
  background: #14d42a;
}

.events-track {
  position: relative;
  width: 1946px;
  height: 4px;
  margin: 6px 0 0 10px;
  background: repeating-linear-gradient(90deg, #e2e2e2 0, #e2e2e2 8px, transparent 8px, transparent 16px);
}

.event-bar {
  position: absolute;
  bottom: 2px;
  width: 10px;
  background: #0a84ff;
}

.now-marker {
  position: absolute;
  top: 6px;
  left: 2137px;
  width: 87px;
  height: 206px;
  display: flex;
  flex-direction: column;
  align-items: center;
}

.now-line {
  width: 4px;
  height: 130px;
  background: #0a84ff;
}

.now-tag {
  width: 87px;
  height: 38px;
  background: #0a84ff;
  border-radius: 3px;
  color: #fff;
  font-size: 22px;
  line-height: 38px;
  text-align: center;
}

/* right panel */
.panel {
  width: 799px;
  flex-shrink: 0;
  display: flex;
  flex-direction: column;
  background: #f5f5f5;
  border-left: 2px solid #dedede;
}

.panel-head {
  height: 110px;
  flex-shrink: 0;
  display: flex;
  align-items: center;
  background: #444;
  margin-left: -2px;
  padding: 0 36px 0 31px;
}

.panel-name {
  margin-left: 22px;
  font-size: 32px;
  font-weight: 400;
  letter-spacing: 1px;
  color: #e4e4e4;
}

.dots {
  display: flex;
  gap: 10px;
}

.dots i {
  display: block;
  width: 7px;
  height: 7px;
  border-radius: 50%;
  background: #777;
}

.dots.light i {
  background: #fff;
}

.panel-head .dots {
  margin-left: auto;
}

.panel-close {
  margin-left: 47px;
}

.panel-scroll {
  height: 1386px;
  flex-shrink: 0;
  display: flex;
  overflow: hidden;
}

.panel-content {
  width: 769px;
  padding: 32px 34px 0 30px;
  flex-shrink: 0;
}

.scroll-track {
  width: 28px;
  flex-shrink: 0;
  padding: 6px 5px 0 7px;
  background: #f7f7f7;
  border-left: 1px solid #e6e6e6;
}

.scroll-thumb {
  display: block;
  height: 691px;
  border-radius: 8px;
  background: #bdbdbd;
}

.info-head {
  height: 48px;
  display: flex;
  align-items: center;
  padding-left: 8px;
}

.section-title {
  font-size: 32px;
  font-weight: 400;
  letter-spacing: 0.5px;
  color: #333;
  white-space: nowrap;
}

.info-head .section-title {
  margin-left: 47px;
}

.props {
  margin-top: 27px;
}

.prop {
  height: 56px;
  display: flex;
  align-items: center;
  gap: 6px;
  font-size: 26px;
  letter-spacing: 1px;
}

.prop.spaced {
  margin: 16px 0;
}

.prop-key {
  width: 225px;
  color: #8c8c8c;
}

.prop-val {
  color: #444;
}

.chip {
  height: 46px;
  padding: 0 24px;
  border-radius: 23px;
  background: #dcdcdc;
  color: #555;
  line-height: 46px;
  letter-spacing: 0;
}

.show-btn {
  display: block;
  width: 705px;
  height: 79px;
  margin-top: 23px;
  border: 2px solid #ddd;
  border-radius: 3px;
  font-size: 28px;
  color: #333;
}

.section-head {
  display: flex;
  align-items: center;
  padding-right: 6px;
}

.health-head {
  height: 64px;
  margin-top: 81px;
  padding-left: 28px;
}

.health-dot {
  width: 40px;
  height: 40px;
  border-radius: 50%;
  background: #14d42a;
}

.health-title {
  margin-left: 51px;
}

.badge {
  height: 38px;
  margin-left: 9px;
  padding: 0 23px;
  border: 2px solid;
  border-radius: 19px;
  font-size: 21px;
  line-height: 36px;
  letter-spacing: 0.4px;
}

.badge.clear {
  border-color: #2da84a;
  color: #2da84a;
  background: #f0fff2;
}

.badge.critical {
  border-color: #f05050;
  color: #f05050;
  background: #fff5f5;
}

.add-btn {
  width: 163px;
  height: 64px;
  margin-left: auto;
  display: flex;
  align-items: center;
  justify-content: center;
  gap: 20px;
  border: 2px solid #ddd;
  border-radius: 3px;
  font-size: 27px;
  color: #333;
}

.chevron {
  margin-left: 34px;
}

.check-card {
  height: 110px;
  margin-top: 32px;
  display: flex;
  align-items: center;
  padding: 0 36px;
  background: #fff;
  border-radius: 4px;
}

.check-dot {
  width: 22px;
  height: 22px;
  border-radius: 50%;
  background: #14d42a;
}

.check-name {
  margin-left: 59px;
  font-size: 26px;
  font-weight: 500;
  letter-spacing: 0.4px;
  color: #333;
}

.check-card .dots, .stream-head .dots {
  margin-left: auto;
}

.propagated {
  height: 40px;
  margin-top: 58px;
  padding-left: 20px;
}

.ring {
  width: 40px;
  height: 40px;
  border: 4px solid #ff2a12;
  border-radius: 50%;
  background: #fff;
}

.propagated-title {
  margin-left: 51px;
}

.telemetry-head {
  height: 64px;
  margin-top: 84px;
  padding-left: 24px;
}

.telemetry-title {
  margin-left: 46px;
}

.stream-card {
  width: 705px;
  height: 300px;
  margin-top: 32px;
  background: #fff;
  border-radius: 4px 4px 0 0;
}

.stream-head {
  height: 110px;
  display: flex;
  align-items: flex-start;
  padding: 40px 36px 0 92px;
}

.stream-name {
  font-size: 26px;
  letter-spacing: 1px;
  color: #777;
}

.stream-head .dots {
  margin-top: 12px;
}

.stream-chart {
  display: block;
}

.grid {
  stroke: #e6e6e6;
  stroke-width: 1.5;
  stroke-dasharray: 9 7;
  fill: none;
}

.axis-num {
  font-size: 24px;
  fill: #c8c8c8;
  text-anchor: end;
}

.series {
  fill: none;
  stroke: #86b2ff;
  stroke-width: 3;
  stroke-linejoin: round;
  vector-effect: non-scaling-stroke;
}
```
